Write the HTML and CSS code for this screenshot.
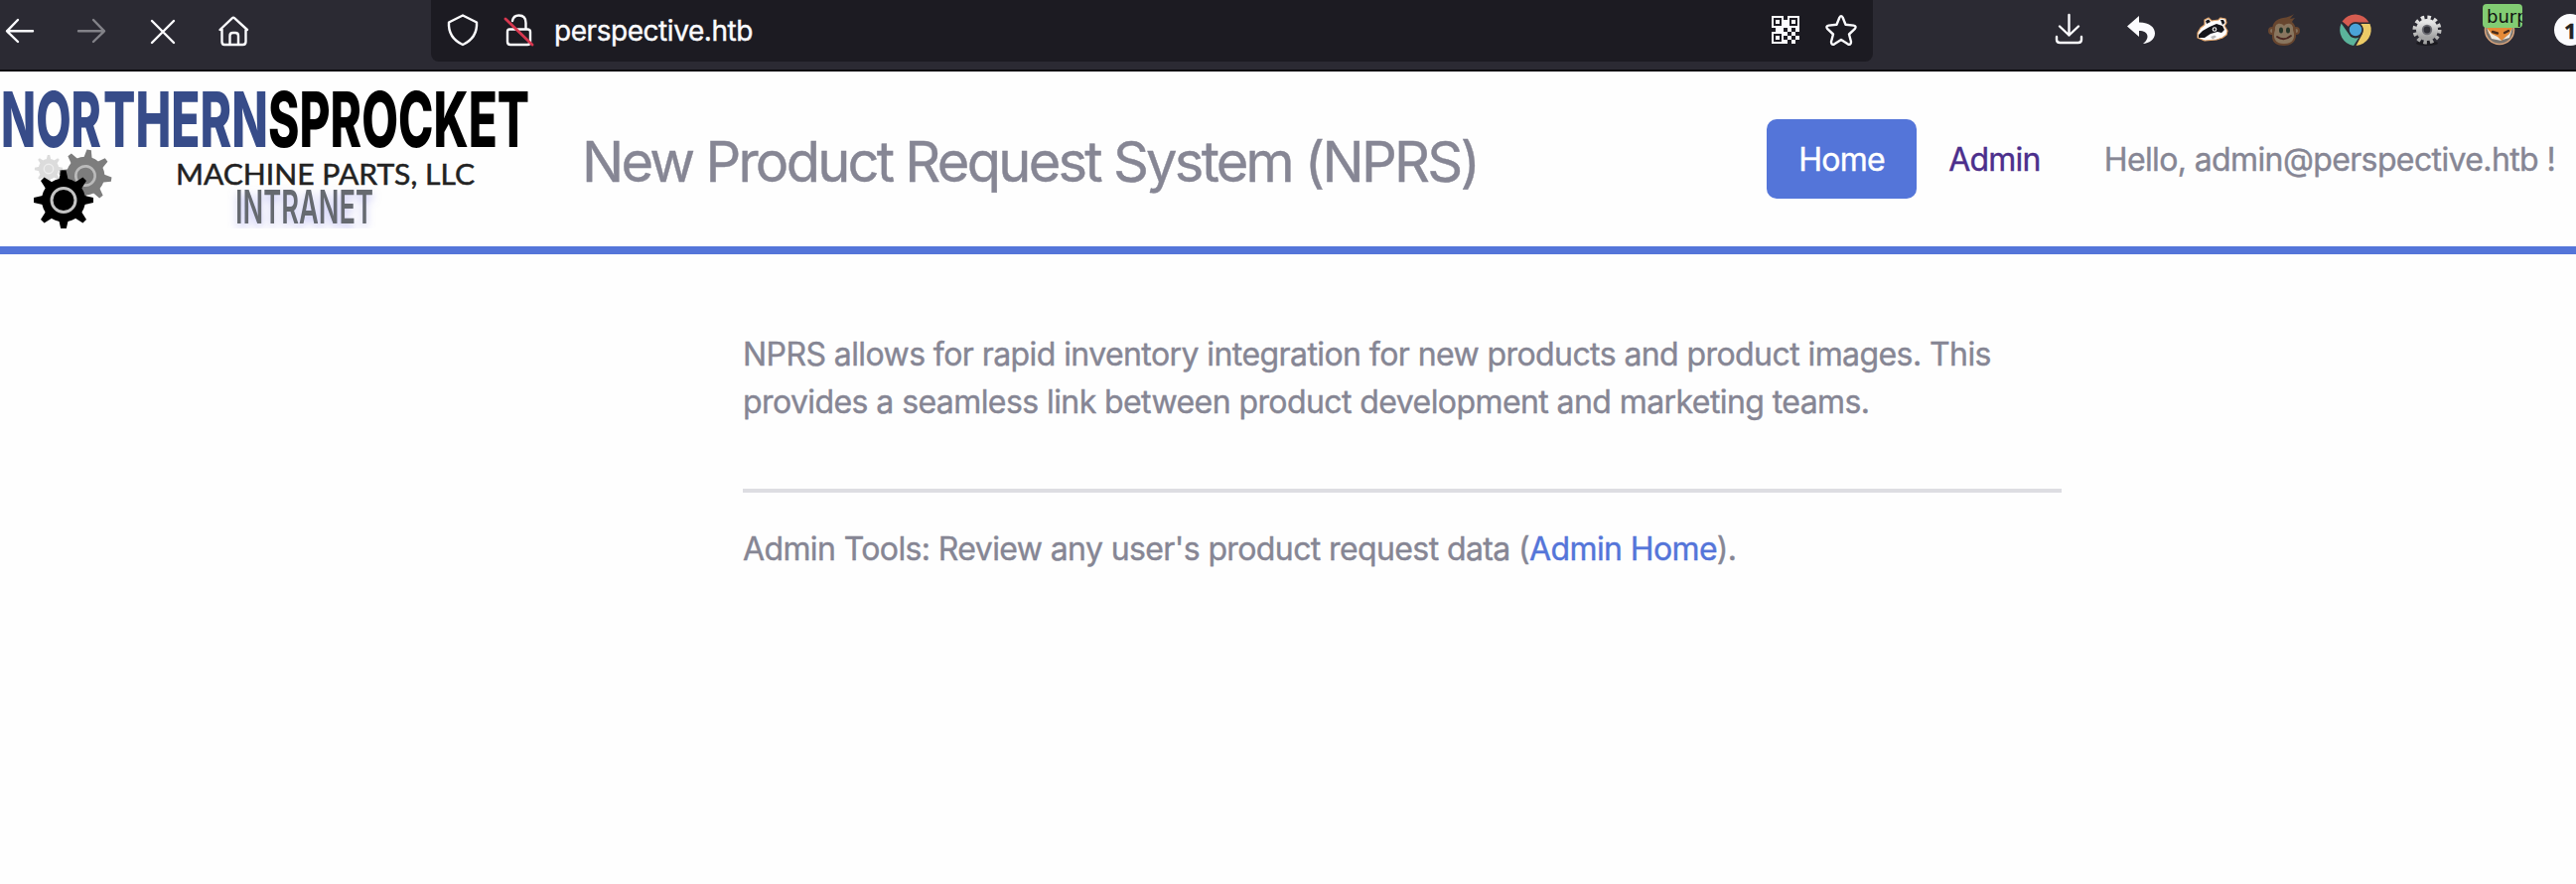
FILE: index.html
```html
<!DOCTYPE html>
<html lang="en">
<head>
<meta charset="utf-8">
<title>New Product Request System (NPRS)</title>
<link rel="stylesheet" href="styles.css">
</head>
<body>
<div class="toolbar">
  <div class="group nav-buttons">
    <span class="slot"><svg class="icon" viewBox="0 0 32 32"><path d="M29 17.300H3M14 6 3 17.300 14 28"/></svg></span>
    <span class="slot dim"><svg class="icon" viewBox="0 0 32 32"><path d="M3 17.300H29M18 6 29 17.300 18 28"/></svg></span>
    <span class="slot"><svg class="icon" viewBox="0 0 32 32"><path d="M5 7 27 29M27 7 5 29"/></svg></span>
    <span class="slot"><svg class="icon" viewBox="0 0 32 32"><path d="M1.500 16 14 4.200Q15 3 16 4.200L29 16M3.500 15V28Q3.500 31 6 31H24.500Q27.500 31 27.500 28V15M11.500 31V22Q11.500 19 14.500 19H17Q20 19 20 22V31"/></svg></span>
  </div>
  <div class="urlbar">
    <svg class="icon" viewBox="0 0 32 32"><path d="M16 1.500 30 8.500Q31 24 16 31Q1 24 2 8.500Z"/></svg>
    <svg class="icon lock" viewBox="0 0 32 32"><path d="M10 7Q11 1.500 16.500 1.500Q23.500 1.500 23.500 9V15M7 15.500H25Q28 15.500 28 18V28Q28 31 25 31H8Q5 31 5 28V18Q5 15.500 7 15.500"/><path class="slash" d="M3 5 30 31"/></svg>
    <span class="url">perspective.htb</span>
    <svg class="icon qr" viewBox="0 0 28 28"><path d="M0 0h12v12H0zM16 0h12v12H16zM0 16h12v12H0zM12 4h4v4h-4zM4 12h4v4H4zM8 12h4v4H8zM12 8h4v4h-4zM16 12h4v4h-4zM24 12h4v4h-4zM12 16h4v4h-4zM20 16h4v4h-4zM16 20h4v4h-4zM24 20h4v4h-4zM12 24h4v4h-4zM20 24h4v4h-4z"/><path class="qr-ring" d="M3 3h6v6H3zM19 3h6v6h-6zM3 19h6v6H3z"/></svg>
    <svg class="icon" viewBox="0 0 32 32"><path d="M14.400 3.500Q16 .7 17.600 3.500L20.500 10.800 28.500 11.600Q32 12.500 29.700 15.200L24 20.500 26 28Q26 31.800 22.700 30.300L16 26 9.300 30.300Q6 31.800 6 28L8 20.500 2.300 15.200Q0 12.500 3.500 11.600L11.500 10.800Z"/></svg>
  </div>
  <div class="group extensions">
    <span class="slot"><svg class="icon" viewBox="0 0 32 32"><path d="M15.500 1V21.500M6 12.500 15.500 21.500 25 12.500M3 23V26Q3 29 6.500 29H24.500Q28 29 28 26V23"/></svg></span>
    <span class="slot"><svg class="icon" viewBox="0 0 32 32"><path class="solid" d="M2 12.500 14 2V8.500C25 8.500 30 14 30 19.500C30 26 24 29.500 18 30C25 25 24 17 14 17V23Z"/></svg></span>
    <span class="slot"><svg class="icon art" viewBox="0 0 32 32">
      <path fill="#fff" stroke="#e2a56b" stroke-width="1.200" d="M1 19 4 14 8 11 8 6 12 4 15 7 22 6 24 4 29 5 30 9 28 12 31 17 30 21 26 24 20 26 8 27 1 24Z"/>
      <path fill="#15151a" d="M2 21 6 17 13 13 20 10 26 12 28 16 25 19 21 18 14 20 8 24 2 24ZM9 7 12 5.500 14 8 10 10ZM24 6 27 6 28.500 9 26 11Z"/>
      <circle cx="18" cy="15.500" r="2.300" fill="#fff"/><circle cx="18" cy="15.500" r="1.200" fill="#222"/>
      <path fill="#b9b9b9" d="M14 23 18 21.500 20 23 16 25.500Z"/></svg></span>
    <span class="slot"><svg class="icon art" viewBox="0 0 32 32">
      <circle cx="4" cy="17" r="4" fill="#68462f"/><circle cx="28" cy="17" r="4" fill="#68462f"/><circle cx="4" cy="17" r="2" fill="#84705c"/><circle cx="28" cy="17" r="2" fill="#84705c"/>
      <path fill="#68462f" d="M4 17C4 8 9 5 15 4Q22 3 26 0Q23 4 22 5L27 4Q25 6 24 8C29 12 28 20 28 23C27 29 22 32 16 32C9 32 4 29 4 23Z"/>
      <path fill="#89765f" d="M7 16C6 9 13 8 16 12C19 8 26 9 25 16C28 24 25 30 16 30C7 30 4 24 7 16Z"/>
      <ellipse cx="13" cy="16.500" rx="2" ry="3" fill="#263428"/><ellipse cx="20" cy="16.500" rx="2" ry="3" fill="#263428"/>
      <path d="M9 23Q16 28 23 22" fill="none" stroke="#4b2721" stroke-width="1.800"/></svg></span>
    <span class="slot"><svg class="icon art" viewBox="0 0 32 32">
      <path fill="#d55c50" d="M2.500 7.500A16 16 0 0 1 29.500 8.500H16A7.500 7.500 0 0 0 9 13Z"/>
      <path fill="#5bb39b" d="M1.600 9.500A16 16 0 0 0 14 31.900L19.500 23.500A7.500 7.500 0 0 1 9 20Z"/>
      <path fill="#eccb67" d="M30.500 10A16 16 0 0 1 16.500 32L23 20Q25 14 21 10Z"/>
      <circle cx="16" cy="16" r="7" fill="#4aa3d8" stroke="#2b2a33" stroke-width="1.500"/></svg></span>
    <span class="slot"><svg class="icon art" viewBox="0 0 32 32">
      <defs><linearGradient id="metal" x2="0" y2="1"><stop stop-color="#e6e6e6"/><stop offset="1" stop-color="#a2a2a2"/></linearGradient></defs>
      <ellipse cx="16" cy="29.500" rx="11" ry="2.500" fill="#1b1a20"/>
      <circle cx="16" cy="16" r="12.500" fill="none" stroke="url(#metal)" stroke-width="4" stroke-linecap="butt" stroke-dasharray="3.500 3.045"/>
      <circle cx="16" cy="16" r="7.500" fill="none" stroke="url(#metal)" stroke-width="7"/><circle cx="16" cy="16" r="5.200" fill="#6c6c73"/><circle cx="16" cy="16" r="3.400" fill="#303037"/></svg></span>
    <span class="slot proxy"><svg class="icon art" viewBox="0 0 32 32">
      <circle cx="16" cy="16" r="14.500" fill="#77736f" stroke="#d6a27b" stroke-width="1.600"/>
      <path fill="#e58a37" d="M3 12H30L26 20 18 27 13 24 5 20Z"/><path fill="#eee8df" d="M3 14 8 20 14 23 18 27 8 25ZM29 14 26 20 19 26 26 24Z"/><path d="M9 18 14 19.500M21 19 25 17" stroke="#4b2d1b"/></svg><span class="proxy-badge">burp</span></span>
    <span class="slot count"><b class="count-badge">1</b></span>
  </div>
</div>
<header class="masthead">
  <svg class="logo" viewBox="0 0 540 158" role="img" aria-label="Northern Sprocket Machine Parts, LLC Intranet">
    <defs>
      <filter id="glow" x="-10%" y="-30%" width="120%" height="180%"><feDropShadow dx="0" dy="4" stdDeviation="4" flood-color="#8b8bea" flood-opacity=".5"/></filter>
      <g id="gear"><circle r="22"/><path d="M-2.500-30H2.500L5-19H-5ZM-2.500 30H2.500L5 19H-5Z"/><path d="M-2.500-30H2.500L5-19H-5ZM-2.500 30H2.500L5 19H-5Z" transform="rotate(45)"/><path d="M-2.500-30H2.500L5-19H-5ZM-2.500 30H2.500L5 19H-5Z" transform="rotate(90)"/><path d="M-2.500-30H2.500L5-19H-5ZM-2.500 30H2.500L5 19H-5Z" transform="rotate(135)"/></g>
    </defs>
    <g class="wordmark">
      <text class="north" x="1" y="76" textLength="101" lengthAdjust="spacingAndGlyphs">NOR</text>
      <text class="north" x="104" y="76" textLength="166" lengthAdjust="spacingAndGlyphs">THERN</text>
      <text x="270" y="76" textLength="263" lengthAdjust="spacingAndGlyphs">SPROCKET</text>
    </g>
    <text class="tagline" x="177" y="114" textLength="301" lengthAdjust="spacingAndGlyphs">MACHINE PARTS, LLC</text>
    <text class="intranet" x="237" y="153" textLength="139" lengthAdjust="spacingAndGlyphs" filter="url(#glow)">INTRANET</text>
    <g transform="translate(49 98) scale(.47)" fill="#dcdcdc"><use href="#gear"/><circle r="10" fill="none" stroke="#eee" stroke-width="3"/></g>
    <g transform="translate(86 105) rotate(8) scale(.88)" fill="#7d7d7d"><use href="#gear"/><circle r="11" fill="none" stroke="#bbb" stroke-width="3"/></g>
    <g transform="translate(64 129.500)"><use href="#gear"/><circle r="12" fill="none" stroke="#c4c4c4" stroke-width="3"/></g>
  </svg>
  <h1 class="title">New Product Request System (NPRS)</h1>
  <nav class="menu">
    <a class="home">Home</a>
    <a class="admin">Admin</a>
    <span class="hello">Hello, admin@perspective.htb !</span>
  </nav>
</header>
<main class="content">
  <p class="intro">NPRS allows for rapid inventory integration for new products and product images. This<br>provides a seamless link between product development and marketing teams.</p>
  <hr class="rule">
  <p class="tools">Admin Tools: Review any user's product request data (<a class="link">Admin Home</a>).</p>
</main>
</body>
</html>
```
FILE: styles.css
```css
* { box-sizing: border-box; }
body { margin: 0; background: #fefefe; color: #868694; font: 32px/48px Inter, "Liberation Sans", sans-serif; letter-spacing: -.58px; -webkit-text-stroke: .4px currentColor; overflow: hidden; }
.toolbar { display: flex; height: 72px; background: #2b2a33; border-bottom: 2px solid #0c0b10; overflow: hidden; }
.group { display: flex; height: 60px; flex: none; }
.nav-buttons { margin-left: -16px; }
.slot { display: flex; width: 72px; align-items: center; justify-content: center; flex: none; position: relative; }
.dim { opacity: .42; }
.icon { width: 32px; height: 32px; flex: none; fill: none; stroke: #fbfbfe; stroke-width: 2.4; stroke-linecap: round; stroke-linejoin: round; overflow: visible; }
.art { stroke: none; }
.solid { fill: #fbfbfe; stroke: none; }
.urlbar { display: flex; align-items: center; width: 1452px; height: 62px; margin-left: 162px; padding: 0 16px 2px; background: #1c1b22; border-radius: 0 0 8px 8px; flex: none; }
.lock { margin-left: 24px; }
.slash { stroke: #d7374f; stroke-width: 2.8; }
.url { margin: 2px auto 0 20px; color: #fbfbfe; font-size: 28px; letter-spacing: -.45px; }
.qr { width: 28px; height: 28px; margin-right: 26px; fill: #fbfbfe; stroke: none; }
.qr-ring { stroke: #1c1b22; stroke-width: 2; stroke-linejoin: miter; }
.extensions { margin-left: 162px; }
.proxy { left: 1px; }
.proxy-badge { position: absolute; left: 19px; top: 4px; width: 40px; height: 24px; padding-left: 4px; overflow: hidden; border-radius: 4px; background: #82cc73; color: #111; font: 18px/25px "DejaVu Sans", sans-serif; letter-spacing: 0; -webkit-text-stroke: 0; }
.count-badge { width: 32px; height: 32px; border-radius: 50%; background: #fbfbfe; color: #222; font: bold 22px/32px "Open Sans", sans-serif; text-align: center; }
.masthead { display: flex; height: 184px; border-bottom: 8px solid #5475d9; }
.logo { width: 540px; height: 158px; flex: none; letter-spacing: 0; -webkit-text-stroke: 0; }
.wordmark { font: 800 77px Inter, sans-serif; fill: #000; }
.north { fill: #374c89; }
.tagline { font: 400 28.500px Lato, sans-serif; fill: #222; stroke: #222; stroke-width: .5px; }
.intranet { font: 600 47px Inter, sans-serif; fill: #666b70; }
.title { margin: 56px 0 0 46px; font-size: 56px; line-height: 70px; font-weight: 400; letter-spacing: -2.75px; white-space: nowrap; }
.menu { display: flex; margin: 48px 21px 0 auto; height: 80px; line-height: 81px; white-space: nowrap; }
.home { width: 151px; height: 80px; text-align: center; color: #fff; background: #5475d9; border-radius: 10px; }
.admin { margin-left: 32px; color: #4c2f8c; }
.hello { margin-left: 64px; letter-spacing: -.62px; }
.admin, .home { letter-spacing: -.75px; }
.content { width: 1328px; margin-left: 748px; padding-top: 77px; white-space: nowrap; }
.intro, .tools { margin: 0; }
.tools { letter-spacing: -.61px; }
.rule { height: 4px; margin: 63px 0 33px; border: 0; background: #dddde2; }
.link { color: #5475d9; }
```
